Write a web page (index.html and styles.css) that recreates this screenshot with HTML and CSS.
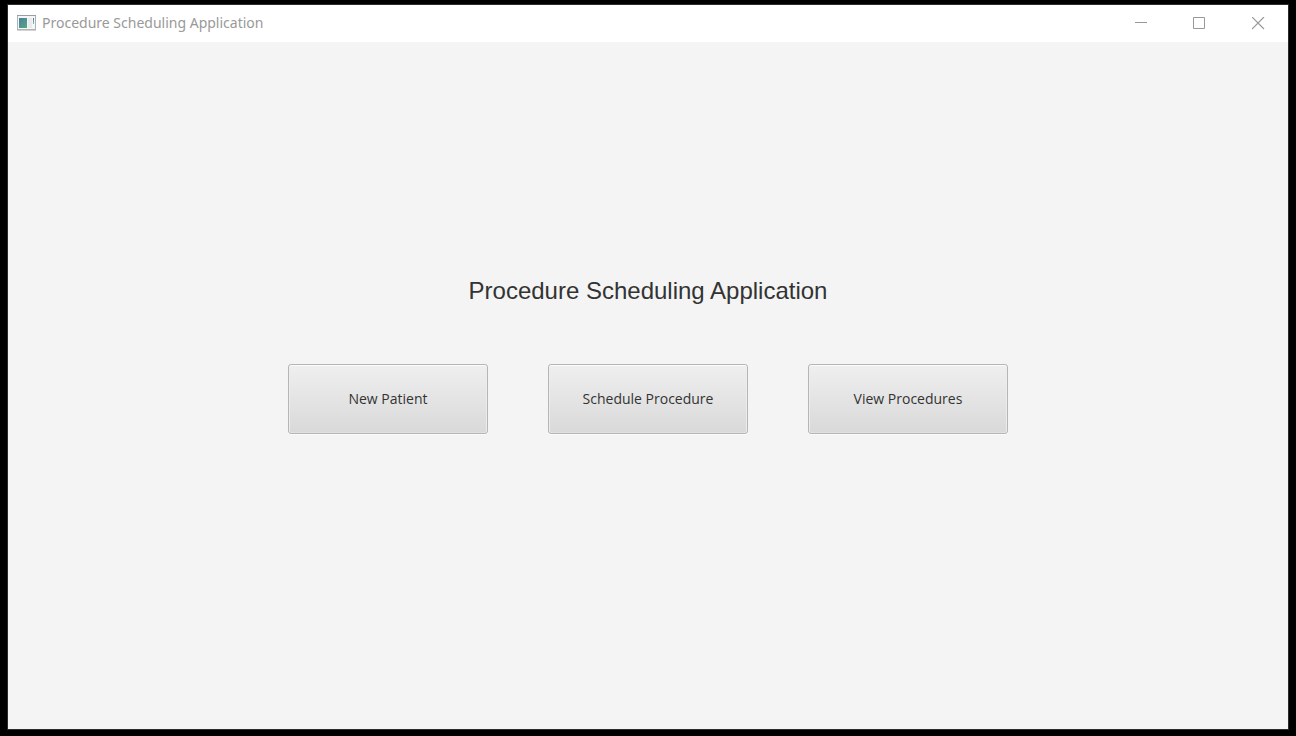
FILE: index.html
```html
<!DOCTYPE html>
<html lang="en">
<head>
<meta charset="utf-8">
<title>Procedure Scheduling Application</title>
<link rel="stylesheet" href="styles.css">
</head>
<body>
<div class="window">
  <header class="titlebar">
    <div class="caption">
      <svg class="app-icon" width="19" height="16" viewBox="0 0 19 16" aria-hidden="true">
        <defs>
          <linearGradient id="pane" x1="0" y1="0" x2="1" y2="1">
            <stop offset="0" stop-color="#4a7fa5"/>
            <stop offset="1" stop-color="#55a878"/>
          </linearGradient>
          <linearGradient id="strip" x1="0" y1="0" x2="0" y2="1">
            <stop offset="0" stop-color="#4878a8"/>
            <stop offset="1" stop-color="#7cc494"/>
          </linearGradient>
        </defs>
        <rect x="0.5" y="0.5" width="18" height="14" fill="#f6f6f6" stroke="#b0b3b5"/>
        <path d="M0 .5H19" stroke="#979fa4"/>
        <path d="M0 15.5H19" stroke="#d4d4d4"/>
        <rect x="2" y="3" width="8" height="10" fill="url(#pane)"/>
        <rect x="11" y="3" width="4" height="10" fill="#e9ebee"/>
        <rect x="16" y="3" width="1" height="6" fill="url(#strip)"/>
      </svg>
      <span class="title">Procedure Scheduling Application</span>
    </div>
    <div class="controls">
      <button class="control" type="button" aria-label="Minimize">
        <svg width="13" height="13" viewBox="0 0 13 13"><path d="M1 5.5H13"/></svg>
      </button>
      <button class="control" type="button" aria-label="Maximize">
        <svg width="13" height="13" viewBox="0 0 13 13"><path d="M.5 .5H11.5V11.5H.5Z"/></svg>
      </button>
      <button class="control" type="button" aria-label="Close">
        <svg width="13" height="13" viewBox="0 0 13 13"><path stroke-width="1.2" d="M0 0L12 12M12 0L0 12"/></svg>
      </button>
    </div>
  </header>
  <main class="content">
    <h1 class="heading">Procedure Scheduling Application</h1>
    <div class="actions">
      <button class="action" type="button">New Patient</button>
      <button class="action" type="button">Schedule Procedure</button>
      <button class="action" type="button">View Procedures</button>
    </div>
  </main>
</div>
</body>
</html>
```
FILE: styles.css
```css
* {
  box-sizing: border-box;
}

body {
  display: flex;
  min-height: 100vh;
  margin: 0;
  padding: 4px 7px 6px;
  background: #000;
}

.window {
  display: flex;
  flex: 1;
  flex-direction: column;
  border: 1px solid #2b2b2b;
  background: #f4f4f4;
}

.titlebar {
  display: flex;
  height: 37px;
  background: #fff;
}

.caption {
  display: flex;
  align-items: center;
  gap: 6px;
  padding: 0 0 1px 9px;
}

.title {
  color: #999;
  font: 14px/20px "Noto Sans", sans-serif;
}

.controls {
  display: flex;
  margin-left: auto;
}

.control {
  display: flex;
  align-items: center;
  justify-content: center;
  width: 59px;
  padding: 0;
  border: 0;
  background: none;
}

.control path {
  fill: none;
  stroke: #999;
}

.content {
  display: flex;
  flex: 1;
  flex-direction: column;
  align-items: center;
  justify-content: center;
  gap: 60px;
  padding-bottom: 60px;
}

.heading {
  margin: 0;
  color: #333;
  font: 24px/27px "Liberation Sans", Arial, sans-serif;
}

.actions {
  display: flex;
  gap: 60px;
}

.action {
  width: 200px;
  height: 70px;
  padding: 0;
  border: 1px solid #b5b5b5;
  border-radius: 3px;
  background: linear-gradient(#efefef, #d9d9d9);
  box-shadow: inset 0 1px #fcfcfc, inset 1px 0 #ededed, inset -1px 0 #ededed, inset 0 -1px #e0e0e0, 0 1px #fafafa;
  color: #333;
  font: 14px/20px "Open Sans", sans-serif;
}
```
